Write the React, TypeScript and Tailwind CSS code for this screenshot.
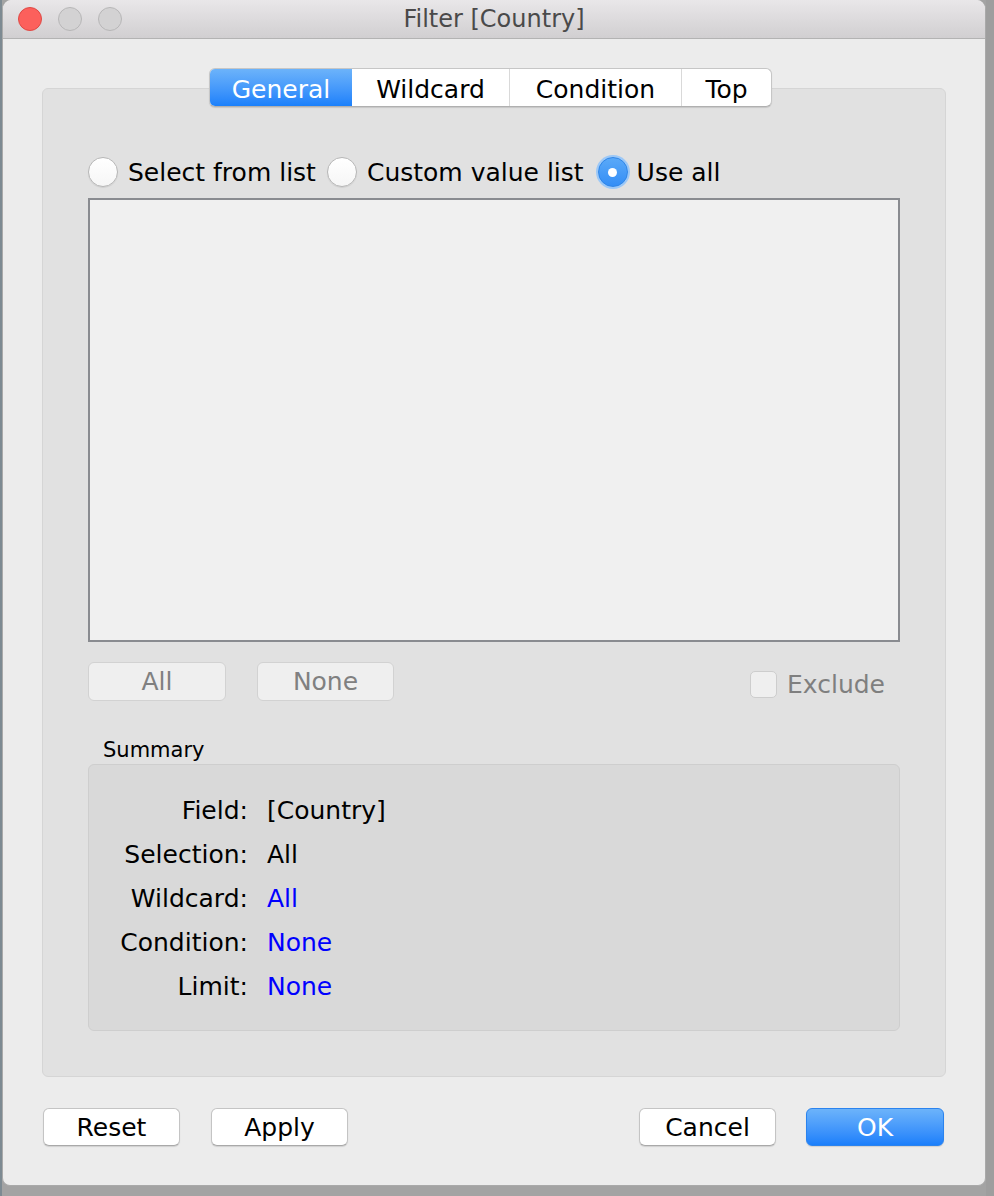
export default function App() {
  const Btn = ({ label, w, cls = "" }: { label: string; w: string; cls?: string }) => (
    <div
      className={`${w} h-[38px] flex items-center justify-center rounded-[6px] bg-white border border-[#c4c4c4] border-b-[#a9a9a9] shadow-[0_1px_1px_rgba(0,0,0,0.12)] text-[25px] text-black leading-none ${cls}`}
    >
      {label}
    </div>
  );
  const Radio = () => (
    <div className="w-[30px] h-[30px] rounded-full bg-gradient-to-b from-white to-[#f6f6f6] border border-[#b7b7b7] shadow-[0_1px_1px_rgba(0,0,0,0.08)] shrink-0" />
  );
  const rows: [string, string, boolean][] = [
    ["Field:", "[Country]", false],
    ["Selection:", "All", false],
    ["Wildcard:", "All", true],
    ["Condition:", "None", true],
    ["Limit:", "None", true],
  ];
  return (
    <div className="w-[994px] h-[1196px] bg-[#a3a3a3] font-['DejaVu_Sans',sans-serif] overflow-hidden flex">
      <div className="w-[2px] h-full bg-[#7d8a92] shrink-0" />
      <div className="w-[984px] h-[1186px] shrink-0 flex flex-col bg-[#ececec] rounded-t-[9px] rounded-b-[8px] border-x border-b border-[#a9a9a9] overflow-hidden">
        {/* Title bar */}
        <div className="h-[39px] shrink-0 grid grid-cols-[1fr_auto_1fr] items-center bg-gradient-to-b from-[#e9e7e9] to-[#d1cfd1] border-b border-[#b3b3b3]">
          <div className="flex items-center gap-[16px] pl-[15px] pb-[1px]">
            <div className="w-[24px] h-[24px] rounded-full bg-[#fc605c] border border-[#de4945]" />
            <div className="w-[24px] h-[24px] rounded-full bg-[#d3d2d3] border border-[#b7b6b7]" />
            <div className="w-[24px] h-[24px] rounded-full bg-[#d3d2d3] border border-[#b7b6b7]" />
          </div>
          <div className="text-[24px] text-[#4a4a4a] leading-none">Filter [Country]</div>
          <div />
        </div>

        {/* Body */}
        <div className="flex flex-col px-[39px] pt-[29px]">
          {/* Tabs */}
          <div className="ml-[167px] relative z-10 flex h-[39px] w-[563px] rounded-[6px] border border-[#c6c6c6] border-b-[#b0b0b0] bg-white overflow-hidden shadow-[0_1px_1px_rgba(0,0,0,0.12)] text-[25px] leading-none">
            <div className="w-[142px] flex items-center justify-center pt-[3px] bg-gradient-to-b from-[#6cb3fa] to-[#1a80fb] text-white">General</div>
            <div className="w-[157px] flex items-center justify-center pt-[3px] text-black">Wildcard</div>
            <div className="w-px bg-[#d9d9d9]" />
            <div className="w-[171px] flex items-center justify-center pt-[3px] text-black">Condition</div>
            <div className="w-px bg-[#d9d9d9]" />
            <div className="flex-1 flex items-center justify-center pt-[3px] text-black">Top</div>
          </div>

          {/* Group box */}
          <div className="-mt-[19px] h-[989px] rounded-[6px] bg-[#e1e1e1] border border-[#d5d5d5] px-[45px] pt-[68px] flex flex-col">
            <div className="h-[30px] flex items-center text-[25px] leading-none text-black">
              <Radio />
              <span className="ml-[10px]">Select from list</span>
              <div className="ml-[11px]"><Radio /></div>
              <span className="ml-[10px]">Custom value list</span>
              <div className="ml-[12px] w-[34px] h-[34px] rounded-full bg-[#9cc8f7] flex items-center justify-center shrink-0">
                <div className="w-[30px] h-[30px] rounded-full bg-gradient-to-b from-[#5aa9f8] to-[#338ef6] border border-[#2f86e8] flex items-center justify-center">
                  <div className="w-[9px] h-[9px] rounded-full bg-white" />
                </div>
              </div>
              <span className="ml-[7px]">Use all</span>
            </div>

            <div className="mt-[11px] h-[444px] border-2 border-[#898b90] bg-[#f0f0f0]" />

            <div className="mt-[20px] h-[39px] flex items-center text-[25px] leading-none">
              <div className="w-[138px] h-[39px] flex items-center justify-center rounded-[6px] bg-[#efefef] border border-[#d2d2d2] text-[#808080]">All</div>
              <div className="ml-[31px] w-[137px] h-[39px] flex items-center justify-center rounded-[6px] bg-[#efefef] border border-[#d2d2d2] text-[#808080]">None</div>
              <div className="ml-auto mr-[15px] flex items-center pt-[6px]">
                <div className="w-[27px] h-[27px] rounded-[5px] bg-[#efefef] border border-[#cdcdcd]" />
                <span className="ml-[10px] text-[#7f7f7f]">Exclude</span>
              </div>
            </div>

            <div className="mt-[36px] pl-[15px] text-[21px] leading-[26px] text-black">Summary</div>

            <div className="mt-[1px] h-[267px] rounded-[6px] bg-[#d9d9d9] border border-[#cecece] pt-[23px] flex flex-col text-[25px] leading-none">
              {rows.map(([l, v, blue]) => (
                <div key={l} className="h-[44px] flex items-center">
                  <div className="w-[159px] text-right text-black">{l}</div>
                  <div className={`ml-[19px] ${blue ? "text-[#0000ff]" : "text-black"}`}>{v}</div>
                </div>
              ))}
            </div>
          </div>

          {/* Footer buttons */}
          <div className="mt-[31px] flex items-center">
            <Btn label="Reset" w="w-[137px]" cls="ml-[1px]" />
            <Btn label="Apply" w="w-[137px]" cls="ml-[31px]" />
            <Btn label="Cancel" w="w-[137px]" cls="ml-auto" />
            <div className="ml-[30px] mr-[2px] w-[138px] h-[38px] flex items-center justify-center rounded-[6px] bg-gradient-to-b from-[#6cb3fa] to-[#1a7ffb] border border-[#2b83ee] shadow-[0_1px_1px_rgba(0,0,0,0.12)] text-[25px] text-white leading-none">
              OK
            </div>
          </div>
        </div>
      </div>
      <div className="flex-1 h-full bg-[#9e9e9e]" />
    </div>
  );
}
